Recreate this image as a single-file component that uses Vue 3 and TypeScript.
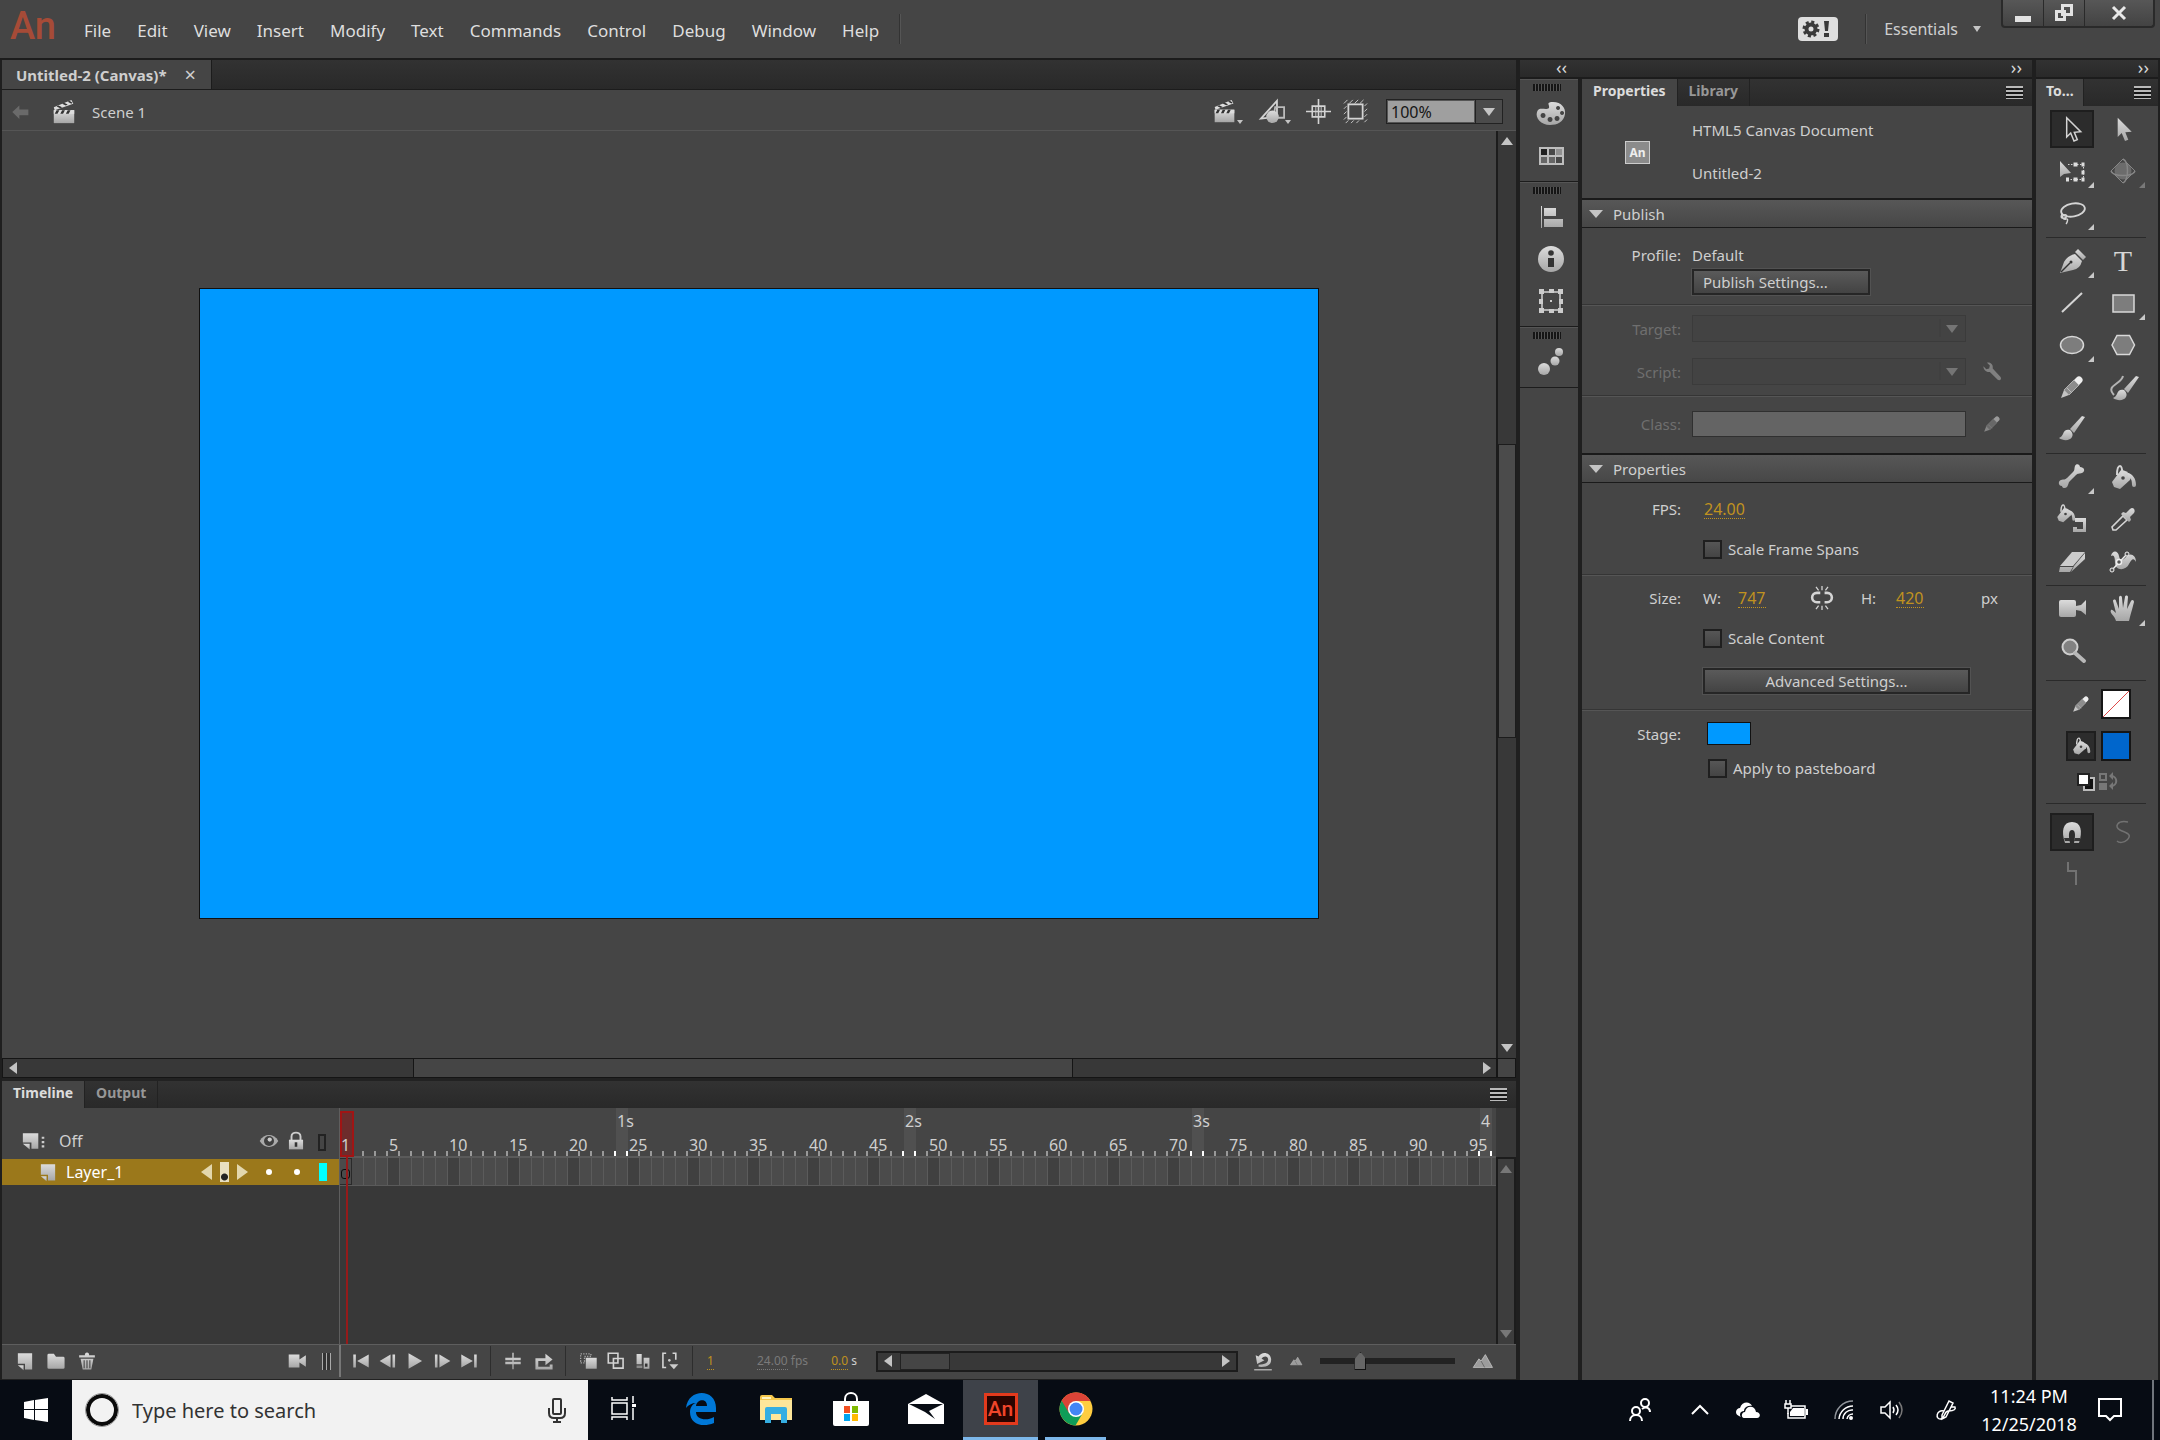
<script setup lang="ts">
import { ref } from 'vue'

interface Tool {
  id: string
  label: string
  flyout?: boolean
  dim?: boolean
}

const menus = ['File', 'Edit', 'View', 'Insert', 'Modify', 'Text', 'Commands', 'Control', 'Debug', 'Window', 'Help']

const toolGroups: Tool[][] = [
  [
    { id: 'select', label: 'Selection' },
    { id: 'subselect', label: 'Subselection' },
    { id: 'transform', label: 'Free Transform', flyout: true },
    { id: 'rotate3d', label: '3D Rotation', flyout: true, dim: true },
    { id: 'lasso', label: 'Lasso', flyout: true },
  ],
  [
    { id: 'pen', label: 'Pen', flyout: true },
    { id: 'text', label: 'Text' },
    { id: 'line', label: 'Line' },
    { id: 'rect', label: 'Rectangle', flyout: true },
    { id: 'oval', label: 'Oval', flyout: true },
    { id: 'poly', label: 'PolyStar' },
    { id: 'pencil', label: 'Pencil' },
    { id: 'paintbrush', label: 'Paint Brush' },
    { id: 'brush', label: 'Brush' },
  ],
  [
    { id: 'bone', label: 'Bone', flyout: true },
    { id: 'bucket', label: 'Paint Bucket' },
    { id: 'ink', label: 'Ink Bottle' },
    { id: 'dropper', label: 'Eyedropper' },
    { id: 'eraser', label: 'Eraser' },
    { id: 'width', label: 'Width' },
  ],
  [
    { id: 'camera', label: 'Camera' },
    { id: 'hand', label: 'Hand', flyout: true },
    { id: 'zoom', label: 'Zoom' },
  ],
]

const dockGroups: Tool[][] = [
  [{ id: 'palette', label: 'Color' }, { id: 'swatches', label: 'Swatches' }],
  [{ id: 'align', label: 'Align' }, { id: 'info', label: 'Info' }, { id: 'bounds', label: 'Transform' }],
  [{ id: 'motion', label: 'Motion Presets' }],
]

const m = 'fill="url(#metal)"'
const l = 'fill="none" stroke="#d4d4d4"'
const arrowPts = '8.7,2.7 8.7,22 12.7,18 16,26 19.3,24.7 16.3,17.3 22.7,16.7'
const clapper = `<path d="M3 12h22v14H3z" ${m}/><path d="M3 12h22v4H3z" fill="#ddd"/><path d="M6 12l-2 4h3l2-4zM12 12l-2 4h3l2-4zM18 12l-2 4h3l2-4z" fill="#333"/><path d="M3 9L22 1l2 4L4 12z" fill="#ddd"/><path d="M6 8l4 2 2-1-4-2zM12 5l4 2 2-1-4-2zM18 3l4 2 1-1-3-2z" fill="#333"/>`
const pencilBody = '<path d="M3 25l3-8 5 5z" fill="#c4c4c4"/><path d="M6 17L16 7l5 5-10 10z" fill="#8c8c8c" stroke="#b0b0b0"/><path d="M9 15l5 5" stroke="#bbb"/><path d="M16 7l2.500-2.500a3.500 3.500 0 0 1 5 5L21 12z" fill="#eee"/>'
const bucketBody = `<path d="M3 19L12 7q6 0 10 6l-1 4-10 9-6-2z" ${m}/><path d="M14 15c-1-3 0-12-3-12S8 9 8 12" ${l} stroke-width="2"/><circle cx="14" cy="15" r="1.800" fill="#444"/><path d="M19 10c5 1 8 6 8 12a2 2 0 0 1-4 0c0-5-1-7-4-8z" ${m}/>`
const brushBody = `<path d="M27 2l-3-1L12 14l4 4z" ${m}/><path d="M12 15c-3-1-6 0-7 4-1 2-2 3-4 4 4 3 11 3 13-1 1-2 1-4-2-7z" ${m}/>`

const icons: Record<string, string> = {
  select: `<polygon points="${arrowPts}" ${l} stroke-width="1.500"/>`,
  subselect: `<polygon points="${arrowPts}" ${m}/>`,
  transform: `<path d="M10 7.500h15.500v15H8" ${l} stroke-dasharray="1.500 1.500"/><path d="M15.500 5.500h4v4h-4zM23.500 5.500h3v4h-3zM23.500 13.500h3v4h-3zM23.500 20.500h3v4h-3zM15.500 20.500h4v4h-4zM8 20.500h3v4H8z" fill="#ddd"/><path d="M2 4v16l4-3 7-1z" ${m}/>`,
  rotate3d: '<circle cx="14" cy="14" r="8.500" fill="#6c6c6c"/><g fill="none" stroke="#868686" stroke-width="1.500"><path d="M2 14c2 6 22 6 24 0M14 2c6 3 6 20 0 24"/><path d="M2 14L14 2l12 12-12 12z" stroke-width="1"/></g>',
  lasso: `<ellipse cx="15" cy="11" rx="12" ry="6.500" transform="rotate(-10 15 11)" ${l} stroke-width="1.800"/><path d="M4 15c-2 4 0 5 3 4s2-4-1-3-1 5 2 4 1 4 0 5" ${l} stroke-width="1.400"/>`,
  pen: `<path d="M2 26L6 15q3-6 11-8l7 7q-2 8-9 9z" ${m}/><path d="M3 25l9-9" stroke="#333" stroke-width="1.500"/><circle cx="13" cy="15" r="1.500" fill="#333"/><path d="M17 5l3-3 8 8-3 3z" ${m}/>`,
  text: '<text x="14" y="24" text-anchor="middle" font-family="Liberation Serif, serif" font-size="30" fill="#d6d6d6">T</text>',
  line: `<path d="M4 23L24 4" ${l} stroke-width="2"/>`,
  rect: '<rect x="4" y="6" width="21" height="17" fill="#7d7d7d" stroke="#d8d8d8" stroke-width="1.500"/>',
  oval: '<ellipse cx="14" cy="14" rx="11.500" ry="8.500" fill="#7d7d7d" stroke="#d8d8d8" stroke-width="1.500"/>',
  poly: '<path d="M3 14L8 4.500h12.500L25.500 14l-5 9.500H8z" fill="#7d7d7d" stroke="#d8d8d8" stroke-width="1.500"/>',
  pencil: pencilBody,
  paintbrush: `<path d="M5 22C-4 12 12 12 14 3" fill="none" stroke="#b4b4b4" stroke-width="2"/><g transform="translate(3 2)">${brushBody}</g>`,
  brush: brushBody,
  bone: `<path d="M3 17c3-1 4 0 6-2l6-6c2-2 1-3 2-6 1-3 5-2 5 1 4 0 6 4 2 6-3 1-4 0-6 2l-6 6c-2 2-1 3-3 6-2 2-5 1-5-1-4 0-4-5-1-6z" ${m}/>`,
  bucket: bucketBody,
  ink: `<g transform="scale(.75) translate(-4 -3)">${bucketBody}</g><path d="M17 13h11v14H15v-5h4v2h6v-7h-8z" ${m}/>`,
  dropper: `<path d="M4 25l-1-3L14 11l4 4L7 25z" ${l} stroke-width="1.600"/><path d="M12 9l2-2 3 1 4-4c3-3 6 1 4 4l-4 4 1 3-2 2z" ${m}/>`,
  eraser: `<path d="M2 19L14 5h13L15 19z" fill="#ccc"/><path d="M2 20h13l-3 5H1zM16 19L27 6v6L13 25z" ${m}/>`,
  width: `<path d="M2 9c1-6 7-6 8 0 1 5 3 5 7 1 4-5 10-2 10 5-2-4-4-4-7 2-3 7-14 7-14-1 0-6-1-9-4-7z" ${m}/><path d="M3 23L18 7" stroke="#eee" stroke-width="1.500"/><circle cx="3" cy="23" r="2" fill="#555" stroke="#eee"/><circle cx="18" cy="7" r="2" fill="#555" stroke="#eee"/><circle cx="10" cy="15" r="2.500" fill="#555" stroke="#eee" stroke-width="1.500"/>`,
  camera: `<rect x="1" y="5" width="17" height="17" rx="2" ${m}/><path d="M18 11l5-1 5-5v15l-5-4-5-1z" ${m}/>`,
  hand: `<path d="M7 26c-1-5-7-8-5-11 2-1 3 2 5 3L4 6c0-2 3-2 3 0l3 8V3c0-3 3-3 3 0l1 10 2-11c0-2 3-2 3 0l-1 12 4-8c1-2 3-1 3 1-2 8-3 11-5 19z" ${m}/>`,
  zoom: '<circle cx="12" cy="10" r="7.500" fill="#828282" stroke="#cfcfcf" stroke-width="2"/><path d="M17 16l9 8" stroke="#b9b9b9" stroke-width="4" stroke-linecap="round"/>',
  magnet: `<path d="M7 25C3 13 5 4 14 4s11 9 7 21h-5c2-9 1-13-2-13s-4 4-2 13z" ${m}/><path d="M6 20h6v3H7zM17 20h5v3h-6z" fill="#333"/>`,
  smooth: '<path d="M19 4C8 2 5 9 11 12s13 4 7 10c-3 3-8 3-10 1" fill="none" stroke="#727272" stroke-width="1.500"/>',
  straighten: '<path d="M10 2v9h8v14" fill="none" stroke="#727272" stroke-width="2"/>',
  palette: `<path fill-rule="evenodd" d="M14 2C24 1 29 8 28 14c-1 8-8 11-15 11C4 25-2 18 0 12c2-6 9-1 12-4 1-3-3-5 2-6zM21 6a2 2 0 1 0 .1 0zM25 11a2 2 0 1 0 .1 0zM20 16a2.500 2.500 0 1 0 .1 0zM13 17a2.500 2.500 0 1 0 .1 0zM6 13a2.500 2.500 0 1 0 .1 0z" ${m}/>`,
  swatches: '<path d="M2 5h25v18H2z" fill="#bdbdbd"/><path d="M4 7h6v6H4z" fill="#222"/><path d="M12 7h6v6h-6zM19 15h6v6h-6z" fill="#484848"/><path d="M4 15h6v6H4zM12 15h6v6h-6z" fill="#666"/><path d="M19 7h6v6h-6z" fill="#909090"/>',
  align: `<path d="M4 3h1v22H4zM7 5h12v8H7zM7 16h19v8H7z" ${m}/>`,
  info: `<circle cx="14" cy="14" r="13" ${m}/><circle cx="14" cy="8" r="2.800" fill="#333"/><path d="M11 13h6v9h-6z" fill="#333"/>`,
  bounds: `<rect x="5" y="5" width="18" height="18" ${l} stroke-width="1.500"/><path d="M2 2h5v5H2zM12 2h5v4h-5zM21 2h5v5h-5zM2 12h4v5H2zM22 12h4v5h-4zM2 21h5v5H2zM12 22h5v4h-5zM21 21h5v5h-5z" fill="#ccc"/><path d="M13 13h2v2h-2z" fill="#ccc"/>`,
  motion: `<circle cx="7" cy="21" r="6" ${m}/><circle cx="18" cy="13" r="4.500" ${m}/><circle cx="22" cy="4" r="4" ${m}/>`,
  clapper,
  back: '<path d="M2 14l11-10v6h14v9H13v6z" fill="#6a6a6a"/>',
  symbols: `<path d="M19 2v18L1 22z" ${l} stroke-width="2"/><path d="M17 9h10v12H15z" fill="none" stroke="#bbb" stroke-width="2"/><circle cx="14" cy="20" r="7" ${m}/>`,
  center: `<path d="M14 0v28M0 14h28M7 8h14v12H7z" ${l} stroke-width="1.800"/><path d="M11 8v12M17 8v12" ${l} stroke-width="1"/>`,
  clip: `<rect x="6" y="6" width="16" height="16" ${l} stroke-width="2"/><path d="M1 5l4-4M7 5l4-4M13 5l4-4M19 5l4-4M1 11l3-3M1 17l3-3M1 23l3-3M24 8l3-3M24 14l3-3M24 20l3-3M24 26l3-3M3 27l3-3M9 27l3-3M15 27l3-3" ${l}/>`,
  wrench: '<path d="M2 6l4 4 4-1 1-4-4-4c5-1 9 3 8 8l11 12c2 3-1 6-4 4L11 14C6 15 2 11 2 6z" fill="#808080"/>',
  page: `<path d="M4 3h20v23H14v-8H4z" ${m}/><path d="M4 20h8v7z" ${m}/>`,
  folder: `<path d="M2 6q0-2 2-2h7l3 4h10q2 0 2 2v13q0 2-2 2H4q-2 0-2-2z" ${m}/>`,
  trash: `<path d="M3 6h8q0-4 3-4t3 4h8v3H3zM5 11h18l-3 15H8z" ${m}/><path d="M10 13v11M14 13v11M18 13v11" stroke="#444" stroke-width="1.500"/>`,
  cam2: `<path d="M1 5h15v7l9-6v16l-9-6v7H1z" ${m}/>`,
  first: `<path d="M2 4h4v20H2zM26 4v20L8 14z" ${m}/>`,
  prev: `<path d="M18 4v20L1 14zM21 4h4v20h-4z" ${m}/>`,
  play: `<path d="M4 2v24l21-12z" ${m}/>`,
  next: `<path d="M3 4h4v20H3zM10 4v20l17-10z" ${m}/>`,
  last: `<path d="M2 4v20l18-10zM22 4h4v20h-4z" ${m}/>`,
  centerFrame: `<path d="M13 1h2v8h11v4H15v2h11v4H15v8h-2v-8H2v-4h11v-2H2V9h11z" ${m}/>`,
  loop: `<path d="M2 10h14V4l10 8-10 8v-6H6v8h16v-3h4v7H2z" ${m}/>`,
  onion: `<path d="M9 9h17v17H9z" ${m}/><path d="M1 3h16v4H7v10H1z" fill="none" stroke="#aaa" stroke-width="2" stroke-dasharray="2 2"/>`,
  onionOut: `<path d="M2 2h15v15H2zM10 10h15v15H10z" ${l} stroke-width="2.500"/>`,
  multi: `<path d="M4 3h8v16H4zM15 9h9v17h-9z" ${m}/><path d="M17 18h4v5h-4z" fill="#333"/><path d="M4 21h9v4H4z" fill="#888"/>`,
  markers: `<path d="M8 2H3v22h5M18 2h5v10" ${l} stroke-width="2.500"/><circle cx="13" cy="13" r="2" fill="#ccc"/><path d="M13 19h14l-7 8z" fill="#ccc"/>`,
  undo: `<path d="M8 23c12 1 18-3 17-11C24 3 12 1 8 9L4 7l2 12 10-5-4-2c3-5 9-4 9 1 0 4-4 7-13 7zM2 26h24v2H2z" ${m}/>`,
  hills: '<path d="M1 23L9 11l3 3 6-9 10 18z" fill="#9c9c9c" stroke="#ccc"/><path d="M12 14l5 9" stroke="#555"/>',
  eye: '<path d="M1 14C7 3 21 3 27 14 21 25 7 25 1 14z" fill="#aaa"/><circle cx="14" cy="14" r="7" fill="#3f3f3f"/><circle cx="15" cy="12" r="3" fill="#ccc"/>',
  lock: `<path d="M7 13V7c0-8 14-8 14 0v6" fill="none" stroke="#ccc" stroke-width="3"/><path d="M3 12h22v15H3z" ${m}/><path d="M12 16h4v7h-4z" fill="#333"/>`,
  depth: `<path d="M1 3h18v22h-8v-9H1z" ${m}/><path d="M1 18h8v8z" ${m}/><path d="M23 8h3v3h-3zM23 14h3v3h-3zM23 20h3v3h-3z" fill="#ccc"/>`,
  link: `<path d="M12 8H8a5 5 0 0 0 0 11h4M17 8h3a5 5 0 0 1 0 11h-3" ${l} stroke-width="3"/><path d="M14 0v5M7 1l3 4M21 1l-3 4M14 28v-5M7 27l3-4M21 27l-3-4" ${l} stroke-width="1.500"/>`,
}

const transport = ['first', 'prev', 'play', 'next', 'last']
const onionTools = ['onion', 'onionOut', 'multi', 'markers']
const frames = Array.from({ length: 96 }, (_, i) => i + 1)
const rulerLabel = (n: number) => (n === 1 || n % 5 === 0 ? String(n) : '')
const secondLabel = (n: number) => (n % 24 ? '' : n === 96 ? '4' : `${n / 24}s`)

const activeTool = ref('select')
const zoomLevel = ref('100%')
const fps = ref('24.00')
const stageW = ref('747')
const stageH = ref('420')
const scaleSpans = ref(false)
const scaleContent = ref(false)
const pasteboard = ref(false)
</script>

<template>
  <div class="screen">
    <svg class="defs" width="0" height="0" aria-hidden="true">
      <linearGradient id="metal" x1="0" y1="0" x2="0" y2="1">
        <stop offset="0" stop-color="#dcdcdc" />
        <stop offset="1" stop-color="#a6a6a6" />
      </linearGradient>
    </svg>

    <header class="menubar">
      <span class="logo">An</span>
      <nav class="menus">
        <button v-for="item in menus" :key="item" type="button">{{ item }}</button>
      </nav>
      <span class="vsep"></span>
      <div class="menu-right">
        <button type="button" class="sync" aria-label="Sync settings">
          <svg width="40" height="24" viewBox="0 0 40 24">
            <rect width="40" height="24" rx="4" fill="#dedede" />
            <circle cx="13" cy="12" r="4.500" fill="none" stroke="#3a3a3a" stroke-width="4" />
            <circle cx="13" cy="12" r="7" fill="none" stroke="#3a3a3a" stroke-width="3" stroke-dasharray="3 2.500" />
            <path d="M26 4h5l-1 10h-3zM26 16h5v4h-5z" fill="#3a3a3a" />
          </svg>
        </button>
        <span class="vsep"></span>
        <button type="button" class="workspace">Essentials <i class="tri down small"></i></button>
        <div class="window-buttons">
          <button type="button" aria-label="Minimize"><svg width="16" height="20"><path d="M0 13h16v6H0z" fill="#e2e2e2" /></svg></button>
          <button type="button" aria-label="Restore">
            <svg width="18" height="18"><path d="M7.500 1.500h9v9h-9zM1.500 7.500h8v8h-8z" fill="none" stroke="#e2e2e2" stroke-width="3" /></svg>
          </button>
          <button type="button" class="close" aria-label="Close"><svg width="14" height="14"><path d="M1 1l12 12M13 1L1 13" stroke="#e8e8e8" stroke-width="3" /></svg></button>
        </div>
      </div>
    </header>

    <main class="workspace-area">
      <div class="document">
        <div class="doc-tabs">
          <button type="button" class="doc-tab">Untitled-2 (Canvas)* <span class="x">×</span></button>
        </div>
        <div class="scene-bar">
          <button type="button" aria-label="Back" class="back"><svg width="20" height="18" viewBox="0 0 28 28" v-html="icons.back"></svg></button>
          <svg width="26" height="26" viewBox="0 0 28 28" v-html="icons.clapper"></svg>
          <span class="scene-name">Scene 1</span>
          <div class="scene-tools">
            <button type="button" aria-label="Edit scene"><svg width="25" height="25" viewBox="0 0 28 28" v-html="icons.clapper"></svg><i class="tri down tiny"></i></button>
            <button type="button" aria-label="Edit symbols"><svg width="25" height="25" viewBox="0 0 28 28" v-html="icons.symbols"></svg><i class="tri down tiny"></i></button>
            <button type="button" aria-label="Center stage"><svg width="25" height="25" viewBox="0 0 28 28" v-html="icons.center"></svg></button>
            <button type="button" aria-label="Clip content"><svg width="25" height="25" viewBox="0 0 28 28" v-html="icons.clip"></svg></button>
            <div class="zoom-box">
              <input v-model="zoomLevel" aria-label="Zoom" />
              <button type="button" aria-label="Zoom levels"><i class="tri down"></i></button>
            </div>
          </div>
        </div>

        <div class="canvas-row">
          <div class="pasteboard"><div class="stage"></div></div>
          <div class="vscroll">
            <i class="tri up"></i>
            <div class="vtrack"><div class="vthumb"></div></div>
            <i class="tri down"></i>
          </div>
        </div>
        <div class="hscroll-row">
          <div class="hscroll">
            <i class="tri left"></i>
            <div class="htrack"><div class="hthumb"></div></div>
            <i class="tri right"></i>
          </div>
          <div class="corner"></div>
        </div>

        <section class="timeline">
          <div class="tabs">
            <button type="button" class="tab on">Timeline</button>
            <button type="button" class="tab">Output</button>
            <button type="button" class="panel-menu" aria-label="Timeline menu"></button>
          </div>
          <div class="tl-body">
            <div class="layers">
              <div class="layers-head">
                <svg class="depth" width="24" height="20" viewBox="0 0 28 28" preserveAspectRatio="none" v-html="icons.depth"></svg>
                <span class="grow">Off</span>
                <svg width="20" height="20" viewBox="0 0 28 28" v-html="icons.eye"></svg>
                <svg width="18" height="20" viewBox="0 0 28 28" v-html="icons.lock"></svg>
                <span class="outline-box"></span>
              </div>
              <div class="layer">
                <svg width="20" height="20" viewBox="0 0 28 28" v-html="icons.page"></svg>
                <span class="grow">Layer_1</span>
                <span class="key-nav"><i class="tri left"></i><b></b><i class="tri right"></i></span>
                <i class="dot"></i><i class="dot"></i><i class="swatch"></i>
              </div>
            </div>
            <div class="frames">
              <div class="ruler">
                <div v-for="n in frames" :key="n" class="tick" :class="{ second: n % 24 === 0, pre: n % 24 === 23, first: n === 1 }">
                  <span class="sec">{{ secondLabel(n) }}</span>
                  <span class="num">{{ rulerLabel(n) }}</span>
                </div>
              </div>
              <div class="cells">
                <div v-for="n in frames" :key="n" class="cell" :class="{ fifth: n % 5 === 0, key: n === 1 }"></div>
              </div>
              <div class="playhead"><b></b><i></i></div>
            </div>
            <div class="tl-scroll"><i class="tri up"></i><i class="tri down"></i></div>
          </div>
          <div class="tl-bar">
            <div class="layer-tools">
              <button type="button" aria-label="New layer"><svg width="20" height="20" viewBox="0 0 28 28" v-html="icons.page"></svg></button>
              <button type="button" aria-label="New folder"><svg width="20" height="20" viewBox="0 0 28 28" v-html="icons.folder"></svg></button>
              <button type="button" aria-label="Delete"><svg width="20" height="20" viewBox="0 0 28 28" v-html="icons.trash"></svg></button>
              <button type="button" aria-label="Add camera" class="add-cam"><svg width="20" height="20" viewBox="0 0 28 28" v-html="icons.cam2"></svg></button>
              <span class="bars"></span>
            </div>
            <div class="btns">
              <button v-for="t in transport" :key="t" type="button" :aria-label="t"><svg width="18" height="18" viewBox="0 0 28 28" v-html="icons[t]"></svg></button>
            </div>
            <div class="btns two">
              <button type="button" aria-label="Center frame"><svg width="18" height="20" viewBox="0 0 28 28" v-html="icons.centerFrame"></svg></button>
              <button type="button" aria-label="Loop"><svg width="20" height="20" viewBox="0 0 28 28" v-html="icons.loop"></svg></button>
            </div>
            <div class="btns four">
              <button v-for="t in onionTools" :key="t" type="button" :aria-label="t"><svg width="18" height="18" viewBox="0 0 28 28" v-html="icons[t]"></svg></button>
            </div>
            <div class="readout">
              <span class="hot">1</span>
              <span class="dimmed"><span class="hot">24.00</span> fps</span>
              <span><span class="hot">0.0</span> s</span>
            </div>
            <div class="tl-hscroll"><i class="tri left"></i><div class="htrack"><div class="tl-thumb"></div></div><i class="tri right"></i></div>
            <div class="tl-zoom">
              <button type="button" aria-label="Reset zoom"><svg width="22" height="22" viewBox="0 0 28 30" v-html="icons.undo"></svg></button>
              <svg width="14" height="12" viewBox="0 0 28 28" v-html="icons.hills"></svg>
              <input type="range" min="0" max="100" value="28" aria-label="Timeline zoom" />
              <svg width="25" height="20" viewBox="0 0 28 28" v-html="icons.hills"></svg>
            </div>
          </div>
        </section>
      </div>

      <div class="side">
        <div class="side-bar"><span>‹‹</span><span>››</span></div>
        <div class="side-cols">
          <aside class="dock">
            <div v-for="(group, g) in dockGroups" :key="g" class="dock-group">
              <span class="grip"></span>
              <button v-for="t in group" :key="t.id" type="button" :aria-label="t.label"><svg width="28" height="28" viewBox="0 0 28 28" v-html="icons[t.id]"></svg></button>
            </div>
          </aside>
          <section class="props">
            <div class="tabs">
              <button type="button" class="tab on">Properties</button>
              <button type="button" class="tab">Library</button>
              <button type="button" class="panel-menu" aria-label="Panel menu"></button>
            </div>
            <div class="doc-info">
              <span class="doc-icon">An</span>
              <div><p>HTML5 Canvas Document</p><p>Untitled-2</p></div>
            </div>

            <button type="button" class="section-head"><i class="tri down"></i>Publish</button>
            <div class="block publish">
              <div class="row"><span class="lbl">Profile:</span><span>Default</span></div>
              <div class="row"><span class="lbl"></span><button type="button" class="btn pub">Publish Settings...</button></div>
            </div>
            <div class="block target off">
              <div class="row"><label class="lbl" for="target">Target:</label><span class="select"><select id="target" disabled></select></span></div>
              <div class="row">
                <label class="lbl" for="script">Script:</label><span class="select"><select id="script" disabled></select></span>
                <svg class="side-icon" width="20" height="20" viewBox="0 0 28 28" v-html="icons.wrench"></svg>
              </div>
            </div>
            <div class="block class-block off">
              <div class="row">
                <label class="lbl" for="cls">Class:</label><input id="cls" class="cls" disabled />
                <svg class="side-icon faded" width="20" height="20" viewBox="0 0 28 28" v-html="icons.pencil"></svg>
              </div>
            </div>

            <button type="button" class="section-head"><i class="tri down"></i>Properties</button>
            <div class="block fps-block">
              <div class="row"><label class="lbl" for="fps">FPS:</label><input id="fps" v-model="fps" class="hot-input fps" /></div>
              <div class="row"><span class="lbl"></span><label class="check"><input v-model="scaleSpans" type="checkbox" />Scale Frame Spans</label></div>
            </div>
            <div class="block size-block">
              <div class="row size">
                <span class="lbl">Size:</span>
                <label class="dim-label" for="sw">W:</label><input id="sw" v-model="stageW" class="hot-input" />
                <button type="button" class="link" aria-label="Link width and height"><svg width="24" height="24" viewBox="0 0 28 28" v-html="icons.link"></svg></button>
                <label class="dim-label" for="sh">H:</label><input id="sh" v-model="stageH" class="hot-input" />
                <span class="px">px</span>
              </div>
              <div class="row"><span class="lbl"></span><label class="check"><input v-model="scaleContent" type="checkbox" />Scale Content</label></div>
              <div class="row"><span class="lbl"></span><button type="button" class="btn adv">Advanced Settings...</button></div>
            </div>
            <div class="block stage-block">
              <div class="row"><span class="lbl">Stage:</span><button type="button" class="stage-color" aria-label="Stage color"></button></div>
              <div class="row"><span class="lbl"></span><label class="check"><input v-model="pasteboard" type="checkbox" />Apply to pasteboard</label></div>
            </div>
          </section>
        </div>
      </div>

      <aside class="tools">
        <div class="side-bar"><span></span><span>››</span></div>
        <div class="tabs">
          <button type="button" class="tab on">To...</button>
          <button type="button" class="panel-menu" aria-label="Tools menu"></button>
        </div>
        <div v-for="(group, g) in toolGroups" :key="g" class="tool-group" :class="{ final: g === toolGroups.length - 1 }">
          <button
            v-for="t in group"
            :key="t.id"
            type="button"
            class="tool"
            :class="{ on: t.id === activeTool, dim: t.dim }"
            :aria-label="t.label"
            @click="activeTool = t.id"
          >
            <svg width="28" height="28" viewBox="0 0 28 28" v-html="icons[t.id]"></svg>
            <i v-if="t.flyout" class="flyout"></i>
          </button>
        </div>
        <div class="colors">
          <span class="color-icon"><svg width="20" height="20" viewBox="0 0 28 28" v-html="icons.pencil"></svg></span>
          <button type="button" class="chip" aria-label="Stroke color"><svg width="26" height="26"><path d="M0 26L26 0" stroke="#e04a4a" /></svg></button>
          <span class="color-icon on"><svg width="20" height="20" viewBox="0 0 28 28" v-html="icons.bucket"></svg></span>
          <button type="button" class="chip fill" aria-label="Fill color"></button>
          <button type="button" class="mini" aria-label="Black and white">
            <svg width="42" height="20">
              <path d="M7 6h10v12H7z" fill="#111" stroke="#bbb" stroke-width="2" />
              <path d="M1 2h11v11H1z" fill="#fff" stroke="#222" stroke-width="2" />
              <path d="M23 2h6v6h-6z" fill="none" stroke="#777" stroke-width="2" />
              <path d="M22 11h8v7h-8z" fill="#777" />
              <path d="M34 4c7 0 7 10 0 10" fill="none" stroke="#777" stroke-width="2" />
              <path d="M36 0v8l-4-4zM36 10v8l-4-4z" fill="#777" />
            </svg>
          </button>
        </div>
        <div class="tool-group options">
          <button type="button" class="tool on" aria-label="Snap to objects"><svg width="28" height="28" viewBox="0 0 28 28" v-html="icons.magnet"></svg></button>
          <button type="button" class="tool" aria-label="Smooth"><svg width="28" height="28" viewBox="0 0 28 28" v-html="icons.smooth"></svg></button>
          <button type="button" class="tool" aria-label="Straighten"><svg width="28" height="28" viewBox="0 0 28 28" v-html="icons.straighten"></svg></button>
        </div>
      </aside>
    </main>

    <footer class="taskbar">
      <button type="button" class="start" aria-label="Start">
        <svg width="24" height="24"><path d="M0 4l10-2v9H0zM11 2l13-2v11H11zM0 12h10v10L0 20zM11 12h13v12l-13-2z" fill="#fff" /></svg>
      </button>
      <div class="search">
        <svg width="36" height="36"><circle cx="18" cy="18" r="14" fill="none" stroke="#0a0a0a" stroke-width="4" /><circle cx="18" cy="18" r="16.500" fill="none" stroke="#999" /></svg>
        <input type="text" placeholder="Type here to search" aria-label="Search" />
        <svg width="18" height="26" fill="none" stroke="#333" stroke-width="2"><rect x="5" y="2" width="8" height="15" rx="1" /><path d="M1 11v5q0 5 5 5h6q5 0 5-5v-5M9 21v4M5 25h8" /></svg>
      </div>
      <button type="button" class="task view" aria-label="Task view">
        <svg width="25" height="25" fill="none" stroke="#fff" stroke-width="1.500"><path d="M1 1v3h15V1M1 24v-3h15v3M1 7h15v11H1zM22 0v7M22 12v12" /><path d="M21 8h4v3h-4z" fill="#fff" stroke="none" /></svg>
      </button>
      <button type="button" class="task" aria-label="Edge">
        <svg width="30" height="32" viewBox="0 0 30 32"><path d="M0 15C2-5 30-5 30 15v4H10c0 8 11 9 18 5v6C16 35 4 31 4 19c0-4 2-8 6-9-4 0-8 2-10 5zM10 13h11c0-8-10-7-11 0z" fill="#0078d7" /></svg>
      </button>
      <button type="button" class="task" aria-label="File Explorer">
        <svg width="32" height="28" viewBox="0 0 32 28"><path d="M0 2q0-2 2-2h10l3 3h17v22H0z" fill="#f5c84c" /><path d="M0 5h32v20H0z" fill="#fde69a" /><path d="M5 28V14q0-2 2-2h18q2 0 2 2v14h-6v-9H11v9z" fill="#35aee2" /><path d="M2 2h9v2H2z" fill="#fff4c0" /></svg>
      </button>
      <button type="button" class="task" aria-label="Store">
        <svg width="36" height="34" viewBox="0 0 36 34"><path d="M12 9V7c0-8 12-8 12 0v2" fill="none" stroke="#fff" stroke-width="2" /><path d="M0 9h36v23q0 2-2 2H2q-2 0-2-2z" fill="#fff" /><path d="M11 14h6v7h-6z" fill="#f25022" /><path d="M19 14h6v7h-6z" fill="#7fba00" /><path d="M11 22h6v7h-6z" fill="#00a4ef" /><path d="M19 22h6v7h-6z" fill="#ffb900" /></svg>
      </button>
      <button type="button" class="task" aria-label="Mail">
        <svg width="36" height="30" viewBox="0 0 36 30"><path d="M0 10L18 0l18 10v20H0z" fill="#fff" /><path d="M1 10h34L21 17l6 8-10-7z" fill="#070c14" /></svg>
      </button>
      <button type="button" class="task active" aria-label="Animate"><span class="an-icon">An</span></button>
      <button type="button" class="task running" aria-label="Chrome">
        <svg width="34" height="34" viewBox="0 0 34 34"><circle cx="17" cy="17" r="16.500" fill="#ffcd40" /><path d="M17 17L2.700 8.800A16.500 16.500 0 0 1 31.300 9H17z" fill="#db4437" /><path d="M17 17L2.700 8.800A16.500 16.500 0 0 0 16.500 33.500l7-12z" fill="#0f9d58" /><path d="M17 9h14.500A16.500 16.500 0 0 0 2.700 8.800L10 21z" fill="#db4437" /><circle cx="17" cy="17" r="8" fill="#fff" /><circle cx="17" cy="17" r="6.500" fill="#4285f4" /></svg>
      </button>
      <div class="tray">
        <button type="button" class="people" aria-label="People"><svg width="22" height="24"><g fill="none" stroke="#fff" stroke-width="2"><circle cx="16" cy="5" r="4" /><circle cx="7" cy="13" r="4" /><path d="M1 23c0-8 12-8 12 0M13 11c4-3 8-1 8 3" /></g></svg></button>
        <button type="button" aria-label="Show hidden icons"><svg width="18" height="12"><path d="M1 10l8-8 8 8" fill="none" stroke="#fff" stroke-width="2" /></svg></button>
        <button type="button" aria-label="OneDrive"><svg width="24" height="16"><path d="M3 14C-2 12 0 6 4 6c2-7 10-7 12-2C9 3 8 8 8 9c-4 0-5 4-3 6z" fill="#fff" /><path d="M8 16c-3 0-3-6 1-6 1-7 10-7 11 0 5 0 5 6 1 6z" fill="#fff" /></svg></button>
        <button type="button" aria-label="Battery"><svg width="24" height="20"><path d="M7 6h14v12H4v-5" fill="none" stroke="#fff" stroke-width="1.500" /><path d="M9 8h11v8H6v-4zM22 9h2v6h-2z" fill="#fff" /><path d="M1 4h6v4H1zM2 0v4M6 0v4M4 8v6" fill="none" stroke="#fff" stroke-width="1.500" /></svg></button>
        <button type="button" aria-label="Network"><svg width="20" height="20"><g fill="none" stroke="#8f949a" stroke-width="1.500"><path d="M1 19A18 18 0 0 1 19 1" /><path d="M5 19A14 14 0 0 1 19 6" stroke="#fff" /><path d="M9 19a9 9 0 0 1 10-9" stroke="#fff" /><path d="M13 19a6 6 0 0 1 6-5" stroke="#fff" /></g><circle cx="17" cy="18" r="2" fill="#fff" /></svg></button>
        <button type="button" aria-label="Volume"><svg width="24" height="20"><g fill="none" stroke="#fff" stroke-width="1.500"><path d="M1 7h4l5-5v16l-5-5H1z" /><path d="M13 7q2 3 0 6M16 5q4 5 0 10" /><path d="M19 2q6 8 0 16" stroke="#777" /></g></svg></button>
        <button type="button" class="ink" aria-label="Windows Ink"><svg width="20" height="22"><g fill="none" stroke="#fff" stroke-width="1.500"><path d="M6 16L13 2l4 2-7 14-4 2zM8 12c-8-2-9 9-3 8 5-2 3-9 8-8 5 0 7-2 6-4h-4" /></g></svg></button>
        <div class="clock"><span>11:24 PM</span><span>12/25/2018</span></div>
        <button type="button" class="notif" aria-label="Notifications"><svg width="24" height="24"><path d="M1 1h22v17h-7l-4 4-4-4H1z" fill="none" stroke="#fff" stroke-width="2" /></svg></button>
        <span class="show-desktop"></span>
      </div>
    </footer>
  </div>
</template>

<style>
body {
  margin: 0;
  background: #454545;
}
</style>

<style scoped>
.screen {
  display: flex;
  flex-direction: column;
  min-height: 100vh;
  background: #454545;
  color: #cfcfcf;
  font: 15px/20px 'Noto Sans', 'Open Sans', sans-serif;
}
.screen * { box-sizing: border-box; }
.defs { position: absolute; }
button { border: 0; background: none; color: inherit; font: inherit; padding: 0; display: flex; align-items: center; justify-content: center; }
input { font: inherit; min-width: 0; }
p { margin: 0; }
svg { display: block; flex: none; overflow: visible; }

.tri { width: 0; height: 0; flex: none; border: 6px solid transparent; }
.tri.down { border-top: 8px solid #c4c4c4; border-bottom: 0; }
.tri.up { border-bottom: 8px solid #c4c4c4; border-top: 0; }
.tri.left { border-right: 8px solid #c4c4c4; border-left: 0; }
.tri.right { border-left: 8px solid #c4c4c4; border-right: 0; }
.tri.small { border-width: 6px 4px 0; }
.tri.tiny { border-width: 4px 3px 0; margin-bottom: -20px; }

.menubar { display: flex; align-items: center; height: 60px; border-bottom: 2px solid #1c1c1c; padding-left: 10px; }
.logo { width: 74px; color: #a64b37; font: 500 38px/44px Roboto, sans-serif; padding-bottom: 6px; }
.menus { display: flex; gap: 26px; padding-top: 3px; font-size: 17px; color: #dedede; }
.vsep { width: 2px; height: 30px; background: #333; border-right: 1px solid #555; }
.menus + .vsep { margin-left: 20px; }
.menu-right { margin-left: auto; display: flex; align-items: center; align-self: stretch; }
.sync { margin-right: 27px; }
.workspace { font-size: 16px; margin-left: 17px; gap: 15px; }
.window-buttons { display: flex; align-self: flex-start; margin: 0 5px 0 20px; background: linear-gradient(#575757, #434343); border: 2px solid #2a2a2a; border-top: 0; border-radius: 0 0 4px 4px; }
.window-buttons button { width: 41px; height: 26px; border-right: 1px solid #2a2a2a; }
.window-buttons .close { width: 68px; border: 0; }

.workspace-area { flex: 1; display: flex; gap: 4px; background: #1f1f1f; padding-right: 2px; min-width: 0; }
.document { flex: 1; min-width: 0; display: flex; flex-direction: column; border-left: 2px solid #1f1f1f; }
.doc-tabs { display: flex; height: 30px; background: linear-gradient(#323232, #292929); border-bottom: 1px solid #1c1c1c; }
.doc-tab { width: 210px; justify-content: flex-start; padding-left: 14px; gap: 9px; background: #454545; border-right: 1px solid #1c1c1c; font-weight: 700; font-size: 15px; white-space: nowrap; }
.x { font-weight: 400; font-size: 20px; margin-left: auto; padding-right: 15px; }
.scene-bar { display: flex; align-items: center; height: 41px; background: #454545; border-bottom: 1px solid #555; padding: 3px 13px 0 8px; }
.back { margin-right: 21px; }
.scene-name { margin-left: 15px; font-size: 15px; }
.scene-tools { margin-left: auto; display: flex; align-items: center; gap: 12px; }
.scene-tools > button:nth-child(-n+2) { width: 36px; justify-content: flex-start; }
.scene-tools > button:nth-child(2) { margin-right: -2px; }
.zoom-box { display: flex; margin-left: 6px; border: 1px solid #222; height: 25px; }
.zoom-box input { width: 88px; border: 1px solid #555; background: #9f9f9f; color: #161616; padding: 0 3px; font-size: 16px; }
.zoom-box button { width: 27px; background: #4b4b4b; border-left: 1px solid #222; }

.canvas-row { flex: 1; display: flex; min-height: 0; background: #454545; }
.pasteboard { flex: 1; display: flex; align-items: center; justify-content: center; padding: 18px 0 0 20px; }
.stage { width: 76%; aspect-ratio: 1122 / 632; background: #0099ff; border: 1px solid #111; }
.vscroll { width: 20px; display: flex; flex-direction: column; align-items: center; padding: 6px 0; background: #383838; border-left: 2px solid #1c1c1c; }
.vtrack { flex: 1; align-self: stretch; display: flex; flex-direction: column; }
.vthumb { margin-top: 299px; height: 294px; background: #4b4b4b; border: 1px solid #1c1c1c; }
.hscroll-row { display: flex; height: 20px; border: 1px solid #151515; }
.hscroll { flex: 1; display: flex; align-items: center; background: #383838; padding: 0 5px 0 6px; }
.htrack { flex: 1; align-self: stretch; display: flex; }
.hthumb { margin-left: 27%; width: 45%; background: #454545; border: 1px solid #151515; border-width: 0 1px; }
.corner { width: 19px; background: #454545; border-left: 2px solid #151515; }

.timeline { border-top: 3px solid #222; display: flex; flex-direction: column; background: #454545; }
.tabs { display: flex; height: 27px; background: linear-gradient(#323232, #292929); }
.tab { padding: 0 11px 3px; font-weight: 700; font-size: 14px; color: #979797; border-right: 1px solid #222; }
.tab.on { background: #454545; color: #dcdcdc; }
.panel-menu { margin: auto 9px auto auto; width: 17px; height: 13px; background: repeating-linear-gradient(#b9b9b9 0 2px, #161616 2px 4px); }
.tl-body { display: flex; height: 237px; border-bottom: 1px solid #5e5e5e; background: #383838; }
.layers { width: 338px; border-right: 1px solid #5e5e5e; }
.layers-head { height: 51px; display: flex; align-items: flex-end; padding: 0 13px 8px 20px; background: #454545; gap: 8px; }
.depth { margin-right: 5px; }
.grow { flex: 1; line-height: 20px; font-size: 16px; }
.outline-box { width: 8px; height: 17px; border: 2px solid #222; margin-left: 5px; }
.layer { height: 26px; display: flex; align-items: center; padding: 0 12px 0 36px; background: #9b781b; color: #fff; }
.layer .grow { margin-left: 8px; }
.key-nav { display: flex; gap: 8px; align-items: center; margin-right: 18px; }
.key-nav b { width: 9px; height: 20px; background: radial-gradient(circle at 50% 75%, #222 3px, #e8dfc0 4px); }
.key-nav .tri { border-left-color: transparent; border-right-color: transparent; border-width: 8px; }
.key-nav .tri.left { border-right: 11px solid #e3d7ad; border-left: 0; }
.key-nav .tri.right { border-left: 11px solid #e3d7ad; border-right: 0; }
.dot { width: 6px; height: 6px; border-radius: 3px; background: #fff; margin-right: 22px; }
.dot + .dot { margin-right: 19px; }
.swatch { width: 8px; height: 18px; background: #0ff; }
.frames { flex: 1; min-width: 0; overflow: hidden; position: relative; }
.ruler, .cells { display: flex; width: max-content; min-width: 100%; background: #454545; }
.ruler { height: 50px; border-bottom: 2px solid #5a5a5a; }
.tick { width: 12px; height: 48px; display: flex; flex-direction: column; justify-content: space-between; padding: 3px 0 1px 1px; background: linear-gradient(#999, #999) right bottom / 2px 5px no-repeat; white-space: nowrap; font-size: 16px; }
.tick.first { background: none; }
.tick.second { background: linear-gradient(#fff, #fff) right bottom / 2px 5px no-repeat, #505050; }
.tick.pre { background-image: linear-gradient(#fff, #fff); }
.sec, .num { position: relative; z-index: 1; width: 0; height: 20px; }
.cells { height: 28px; border-bottom: 1px solid #5a5a5a; background: #4b4b4b; }
.cell { width: 12px; border-right: 1px solid #5b5b5b; }
.cell.fifth { background: #404040; }
.cell.key { display: flex; align-items: flex-end; justify-content: center; padding-bottom: 5px; border: 1px solid #2a2a2a; border-left: 0; }
.cell.key::after { content: ''; width: 7px; height: 8px; border: 1px solid #0c0c0c; border-radius: 3px; }
.playhead { position: absolute; left: 0; top: 3px; bottom: 0; width: 14px; display: flex; flex-direction: column; align-items: center; }
.playhead b { width: 14px; height: 46px; border: 2px solid #a01414; background: rgb(150 20 20 / 50%); }
.playhead i { width: 2px; flex: 1; background: #961a1a; }
.tl-scroll { width: 20px; margin-top: 49px; padding: 6px 2px; display: flex; flex-direction: column; justify-content: space-between; border: 2px solid #1c1c1c; border-bottom: 0; background: #3d3d3d; }
.tl-scroll .tri.up { border-bottom-color: #777; }
.tl-scroll .tri.down { border-top-color: #777; }

.tl-bar { display: flex; height: 35px; align-items: center; padding-bottom: 2px; border-bottom: 1px solid #222; }
.layer-tools { width: 339px; height: 100%; display: flex; align-items: center; gap: 11px; padding: 0 8px 0 13px; border-right: 2px solid #777; }
.add-cam { margin-left: auto; }
.bars { width: 9px; height: 17px; background: repeating-linear-gradient(90deg, #aaa 0 1px, #333 1px 4px); margin-left: 3px; }
.btns { display: flex; padding: 0 8px 0 6px; border-right: 1px solid #2d2d2d; height: 30px; align-items: center; }
.btns button { width: 27px; height: 27px; }
.btns.two button { width: 31px; }
.btns.two { padding: 0 6px; }
.btns.four { padding: 0 9px; }
.readout { display: flex; align-items: baseline; font-size: 12px; line-height: 16px; padding: 0 19px 0 14px; width: 183px; justify-content: space-between; }
.readout > span { white-space: nowrap; }
.readout > span:first-child { margin-right: 20px; }
.hot { color: #c0921f; border-bottom: 1px dotted #c0921f; }
.dimmed, .dimmed .hot { color: #7a7a7a; border-color: #7a7a7a; }
.tl-hscroll { width: 362px; height: 21px; display: flex; align-items: center; padding: 0 6px; background: #383838; border: 2px solid #1c1c1c; }
.tl-thumb { width: 50px; margin-left: 8px; background: #454545; border: 1px solid #222; }
.tl-zoom { display: flex; align-items: center; margin-left: 14px; gap: 15px; }
input[type='range'] { appearance: none; width: 135px; height: 20px; margin: 0 0 0 2px; background: linear-gradient(#222, #222) center / 100% 6px no-repeat; }
input[type='range']::-webkit-slider-thumb { appearance: none; width: 12px; height: 18px; background: #666; border: 1px solid #111; clip-path: polygon(50% 0, 100% 40%, 100% 100%, 0 100%, 0 40%); }

.side { display: flex; flex-direction: column; width: 512px; flex: none; }
.side-bar { height: 19px; display: flex; justify-content: space-between; padding: 0 10px 0 36px; background: linear-gradient(#323232, #292929); border-bottom: 2px solid #1c1c1c; color: #d8d8d8; font-size: 18px; line-height: 15px; }
.side-cols { flex: 1; display: flex; gap: 4px; }
.dock { width: 58px; background: #454545; }
.dock-group { display: flex; flex-direction: column; align-items: center; padding: 4px 0 4px 4px; border-bottom: 1px solid #1c1c1c; border-top: 1px solid #555; }
.grip { width: 28px; height: 7px; margin-bottom: 2px; margin-right: 8px; background: repeating-linear-gradient(90deg, #151515 0 2px, #555 2px 3px); }
.dock-group button { width: 42px; height: 42px; }
.props { flex: 1; background: #454545; }
.doc-info { display: flex; align-items: center; height: 92px; padding: 0 0 0 43px; gap: 42px; }
.doc-info p { line-height: 43px; }
.doc-icon { width: 25px; height: 23px; border: 1px solid #ccc; background: #8b8b8b; color: #eee; font: 700 12px/21px 'Noto Sans', sans-serif; text-align: center; }
.section-head { width: 100%; height: 30px; justify-content: flex-start; gap: 10px; padding-left: 7px; background: linear-gradient(#575757, #474747); border: solid #1a1a1a; border-width: 2px 0 1px; font-size: 15px; }
.section-head .tri { border-width: 8px 7px 0; }
.block { display: flex; flex-direction: column; border-bottom: 1px solid #555; box-shadow: inset 0 -1px #353535; }
.row { display: flex; align-items: center; }
.lbl { width: 99px; text-align: right; margin-right: 11px; flex: none; }
.btn { border: 2px solid #262626; background: linear-gradient(#5a5a5a, #434343); height: 26px; outline: 1px solid #525252; }
.pub { width: 178px; justify-content: flex-start; padding-left: 9px; }
.adv { width: 267px; margin-left: 11px; }
.publish { height: 78px; padding-top: 17px; gap: 4px; }
.off { color: #6f6f6f; }
.target { height: 91px; padding-top: 9px; gap: 16px; }
.select { position: relative; width: 274px; height: 27px; }
.select::after { content: ''; position: absolute; right: 8px; top: 10px; border: 6px solid transparent; border-top: 8px solid #757575; border-bottom: 0; }
.select::before { content: ''; position: absolute; right: 25px; top: 4px; height: 18px; border-left: 2px solid #3a3a3a; }
.select select { appearance: none; width: 100%; height: 100%; background: #434343; border: 1px solid #383838; border-radius: 0; }
.side-icon { margin-left: 16px; }
.faded { opacity: 0.5; }
.class-block { height: 56px; padding-top: 14px; border-bottom: 0; box-shadow: none; }
.cls { width: 274px; height: 26px; background: #646464; border: 1px solid #303030; }
.hot-input { width: 28px; height: 20px; padding: 0; border: 0; border-bottom: 1px dotted #c0921f; background: none; color: #c0921f; font-size: 16px; }
.hot-input.fps { width: 41px; margin-left: 12px; }
.fps-block { height: 93px; padding-top: 16px; gap: 19px; }
.check { display: flex; align-items: center; gap: 6px; margin-left: 11px; height: 22px; }
.check input { appearance: none; width: 19px; height: 19px; margin: 0; background: linear-gradient(#565656, #444); border: 2px solid #1f1f1f; }
.size-block { height: 135px; padding-top: 10px; gap: 17px; }
.dim-label { width: 35px; }
.size .dim-label { margin-left: 11px; }
.link { margin: 0 16px 0 44px; }
.px { margin-left: 57px; }
.size-block .row:last-child { margin-top: 2px; }
.stage-block { padding-top: 11px; gap: 12px; border: 0; box-shadow: none; }
.stage-color { width: 44px; height: 23px; margin-left: 15px; background: #0099ff; border: 1px solid #111; }
.stage-block .check { margin-left: 16px; }

.tools { width: 122px; flex: none; background: #454545; }
.tools .side-bar { padding-right: 9px; }
.tools .tab { padding: 0 9px 3px 10px; }
.tools .panel-menu { margin-right: 7px; }
.tool-group { display: grid; grid-template-columns: 51px 51px; grid-auto-rows: 42px; margin: 0 12px 0 10px; padding: 2px 0 3px; border-bottom: 1px solid #2a2a2a; }
.tool-group.final { padding-bottom: 8px; }
.tool { position: relative; justify-self: center; align-self: center; width: 44px; height: 38px; }
.tool.on { background: #2c2c2c; border: 2px solid #1e1e1e; }
.flyout { position: absolute; right: 0; bottom: 2px; border: 3px solid transparent; border-right-color: #c8c8c8; border-bottom-color: #c8c8c8; }
.dim .flyout { opacity: 0.4; }
.colors { display: grid; grid-template-columns: 30px 30px; grid-auto-rows: 30px; gap: 12px 5px; padding: 8px 0 0 30px; }
.color-icon { display: flex; align-items: center; justify-content: center; }
.color-icon.on { background: #2c2c2c; border: 2px solid #1e1e1e; }
.chip { background: #fff; border: 2px solid #161616; }
.chip.fill { background: #0066cc; }
.mini { grid-column: span 2; height: 18px; padding-left: 11px; justify-content: flex-start; }
.options { border-top: 1px solid #2a2a2a; border-bottom: 0; padding-top: 7px; }

.taskbar { display: flex; height: 60px; background: #070c14; color: #fff; }
.start { width: 72px; }
.search { width: 516px; display: flex; align-items: center; background: #f2f2f2; padding: 0 22px 0 12px; gap: 12px; }
.search input { flex: 1; border: 0; background: none; font-size: 20px; padding: 0; }
.search input::placeholder { color: #333; opacity: 1; }
.task { width: 75px; border-bottom: 3px solid transparent; }
.task.view { padding-right: 4px; }
.task.active { background: #3e4249; border-color: #7cb7ea; }
.task.running { width: 61px; margin-left: 7px; border-color: #7cb7ea; }
.an-icon { width: 34px; height: 32px; background: #2a0400; border: 3px solid #e33a1d; color: #f0452a; font: 500 21px/26px Roboto, sans-serif; text-align: center; }
.tray { margin-left: auto; display: flex; align-items: stretch; }
.tray button { width: 48px; }
.tray .people { margin-right: 12px; }
.tray .ink { margin: 0 12px 0 6px; }
.clock { width: 94px; display: flex; flex-direction: column; align-items: center; justify-content: center; font-size: 18px; line-height: 28px; white-space: nowrap; }
.tray .notif { width: 76px; padding-right: 8px; }
.show-desktop { width: 8px; border-left: 2px solid #70757c; }
</style>
